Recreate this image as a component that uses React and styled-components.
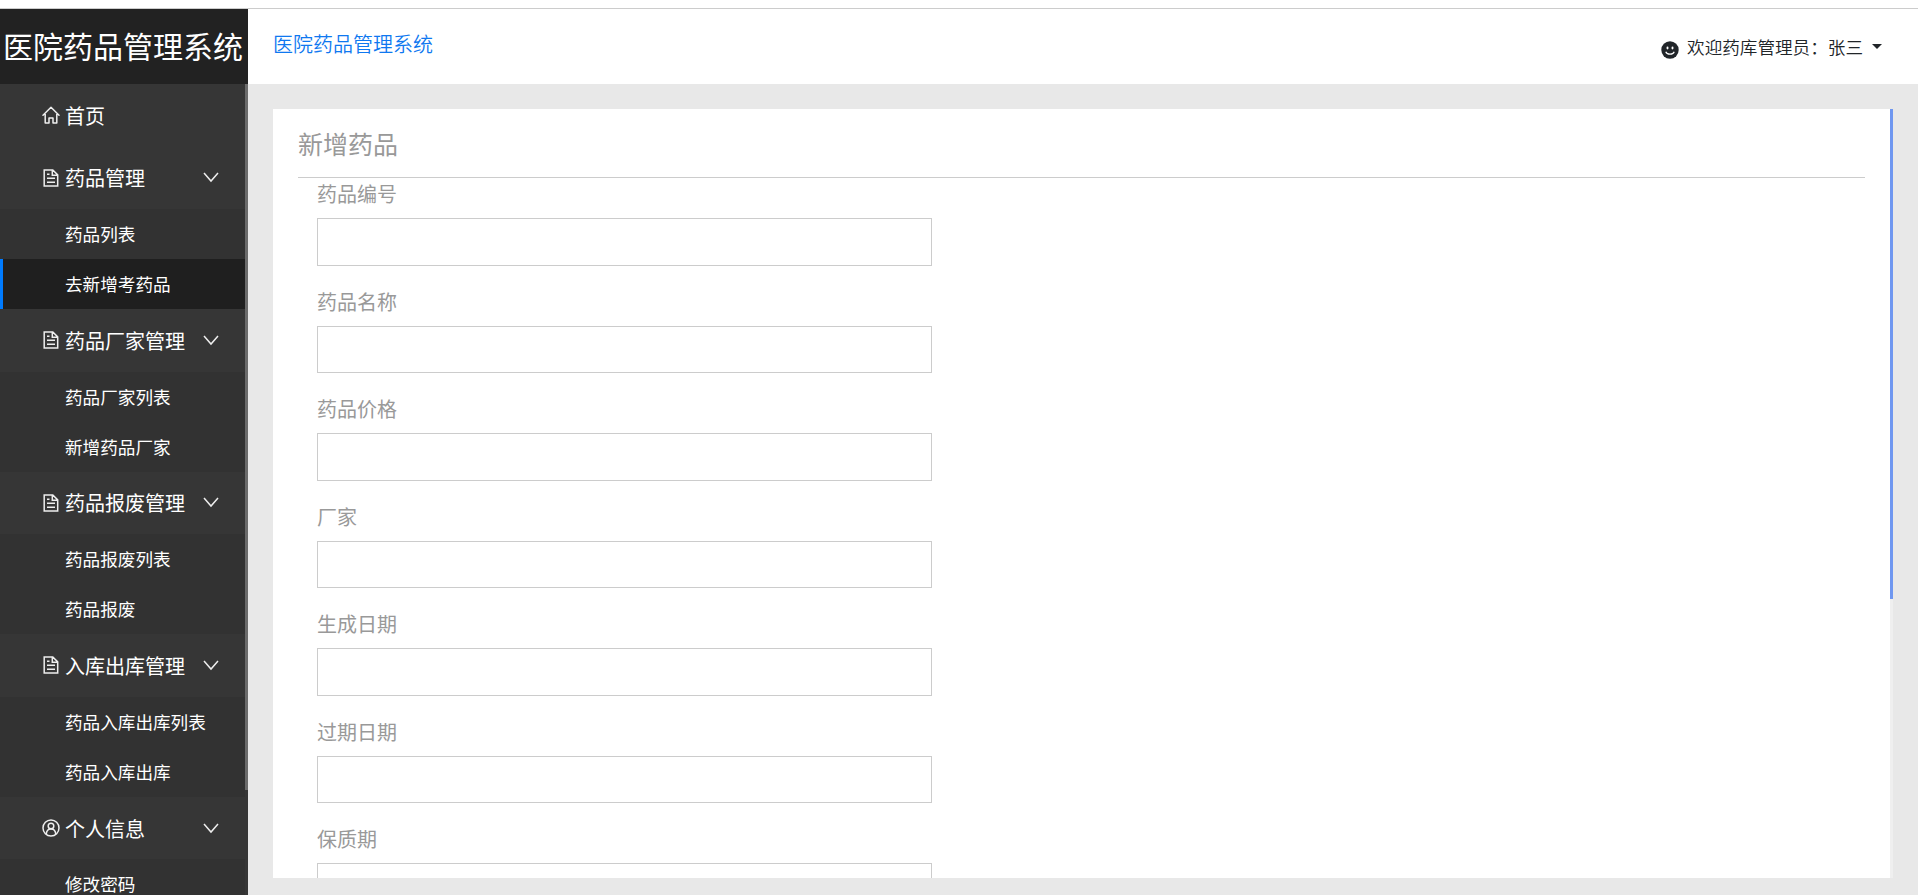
import React from 'react';
import styled, { createGlobalStyle } from 'styled-components';

const GlobalStyle = createGlobalStyle`
  * {
    box-sizing: border-box;
  }
  body {
    margin: 0;
    background-color: #fff;
    color: #212529;
    font-family: "Noto Sans CJK SC", sans-serif;
    font-weight: 400;
    overflow: hidden;
  }
`;

const Page = styled.div`
  display: flex;
  flex-direction: column;
  height: 895px;
  padding-top: 8px;
`;

const Layout = styled.div`
  display: flex;
  flex: 1;
  min-height: 0;
  border-top: 1px solid #ccc;
`;

const Sidebar = styled.aside`
  display: flex;
  flex-direction: column;
  width: 248px;
  background-color: #363636;
  color: #fff;
`;

const Brand = styled.div`
  height: 75px;
  padding-left: 3px;
  flex-shrink: 0;
  line-height: 73px;
  font-size: 30px;
  white-space: nowrap;
  background-color: #222;
`;

const MenuScroll = styled.div`
  display: flex;
  flex: 1;
  min-height: 0;
  overflow: hidden;
`;

const Menu = styled.nav`
  width: 245px;
`;

const MenuThumb = styled.div`
  width: 3px;
  height: 706px;
  background-color: #6b6b6b;
`;

const MenuItem = styled.div`
  display: flex;
  align-items: center;
  height: 62.55px;
  padding: 0 26px 0 42px;
  font-size: 20px;
  cursor: pointer;
`;

const MenuLabel = styled.span`
  flex: 1;
  margin-left: 5px;
  white-space: nowrap;
`;

const SubMenu = styled.ul`
  margin: 0;
  padding: 0;
  list-style: none;
  background-color: #323232;
`;

const SubItem = styled.li`
  height: 50px;
  padding-left: ${props => (props.$active ? '62px' : '65px')};
  border-left: ${props => (props.$active ? '3px solid #007bff' : 'none')};
  background-color: ${props => (props.$active ? '#1f1f1f' : 'transparent')};
  font-size: 17.6px;
  line-height: 50px;
  white-space: nowrap;
  cursor: pointer;
`;

const Main = styled.main`
  display: flex;
  flex: 1;
  flex-direction: column;
  min-width: 0;
  background-color: #e8e8e8;
`;

const Header = styled.header`
  display: flex;
  justify-content: space-between;
  height: 75px;
  padding: 0 36px 0 25px;
  background-color: #fff;
`;

const HeaderLink = styled.a`
  font-size: 20px;
  font-weight: 350;
  line-height: 69px;
  color: #0f78f0;
`;

const UserMenu = styled.div`
  display: flex;
  align-items: center;
  height: 75px;
  font-size: 17.6px;
  font-weight: 350;
`;

const UserName = styled.span`
  margin: 0 9px 0 8px;
`;

const Caret = styled.span`
  margin-top: -1px;
  border-top: 5px solid #212529;
  border-left: 5px solid transparent;
  border-right: 5px solid transparent;
`;

const Content = styled.div`
  display: flex;
  flex: 1;
  min-height: 0;
  margin: 25px 25px 17px;
`;

const Panel = styled.section`
  flex: 1;
  padding: 0 25px;
  background-color: #fff;
  color: #999;
  overflow: hidden;
`;

const PanelTrack = styled.div`
  width: 3px;
  background-color: #efefef;
`;

const PanelThumb = styled.div`
  height: 490px;
  background-color: #6f97f0;
`;

const PanelTitle = styled.h3`
  height: 69px;
  margin: 0;
  border-bottom: 1px solid #ccc;
  font-size: 25px;
  font-weight: 400;
  line-height: 68px;
`;

const Form = styled.form`
  display: flex;
  flex-direction: column;
  gap: 20px;
  width: 634px;
  padding-left: 19px;
`;

const Field = styled.label`
  display: flex;
  flex-direction: column;
  gap: 9px;
  font-size: 20px;
  line-height: 31px;
`;

const Input = styled.input`
  width: 100%;
  height: 47.5px;
  padding: 6px 12px;
  border: 1px solid #ccc;
  border-radius: 0;
  background-color: #fff;
  outline: none;
`;

const HomeIcon = () => (
  <svg width="18" height="18" viewBox="0 0 18 18" fill="none" stroke="#eee" strokeWidth="1.5" strokeLinejoin="round" strokeLinecap="round">
    <path d="M1 9.2 9 1.3l8 7.9M3.2 8v9H7v-5h4v5h3.8V8" />
  </svg>
);

const FileIcon = () => (
  <svg width="18" height="18" viewBox="0 0 18 18" fill="none" stroke="#eee" strokeWidth="1.5">
    <path d="M2.2 1h8.6l4.9 4.9V17H2.2zM10.3 1v5.2h5.4M5 5.2h2.5M5 9.3h8M5 13.2h8" />
  </svg>
);

const PersonIcon = () => (
  <svg width="18" height="18" viewBox="0 0 18 18" fill="none" stroke="#eee" strokeWidth="1.5">
    <circle cx="9" cy="9" r="8" />
    <circle cx="9" cy="7" r="2.8" />
    <path d="M4.3 15c.2-3 2-5 4.7-5s4.5 2 4.7 5" />
  </svg>
);

const Chevron = () => (
  <svg width="16" height="11" viewBox="0 0 16 11" fill="none" stroke="#eee" strokeWidth="1.5">
    <path d="m1 1 7 8 7-8" />
  </svg>
);

const SmileSvg = styled.svg`
  margin-top: 6px;
`;

const SmileIcon = () => (
  <SmileSvg width="18" height="18" viewBox="0 0 18 18">
    <circle cx="9" cy="9" r="8.7" fill="#212529" />
    <ellipse cx="6.5" cy="7" rx="1" ry="1.4" fill="#fff" />
    <ellipse cx="11.5" cy="7" rx="1" ry="1.4" fill="#fff" />
    <path d="M4.8 10.7c1 3.2 7.4 3.2 8.4 0" fill="none" stroke="#fff" strokeWidth="1.2" />
  </SmileSvg>
);

const menu = [
  { label: '首页', icon: HomeIcon },
  { label: '药品管理', icon: FileIcon, items: ['药品列表', '去新增考药品'] },
  { label: '药品厂家管理', icon: FileIcon, items: ['药品厂家列表', '新增药品厂家'] },
  { label: '药品报废管理', icon: FileIcon, items: ['药品报废列表', '药品报废'] },
  { label: '入库出库管理', icon: FileIcon, items: ['药品入库出库列表', '药品入库出库'] },
  { label: '个人信息', icon: PersonIcon, items: ['修改密码'] }
];

const fields = ['药品编号', '药品名称', '药品价格', '厂家', '生成日期', '过期日期', '保质期'];

const MenuGroup = ({ group, current }) => {
  const Icon = group.icon;
  return (
    <div>
      <MenuItem>
        <Icon />
        <MenuLabel>{group.label}</MenuLabel>
        {group.items && <Chevron />}
      </MenuItem>
      {group.items &&
      <SubMenu>
        {group.items.map(item => (
          <SubItem key={item} $active={item === current}>{item}</SubItem>
        ))}
      </SubMenu>
      }
    </div>
  );
};

const App = () => (
  <Page>
    <GlobalStyle />
    <Layout>
      <Sidebar>
        <Brand>医院药品管理系统</Brand>
        <MenuScroll>
          <Menu>
            {menu.map(group => (
              <MenuGroup key={group.label} group={group} current="去新增考药品" />
            ))}
          </Menu>
          <MenuThumb />
        </MenuScroll>
      </Sidebar>
      <Main>
        <Header>
          <HeaderLink>医院药品管理系统</HeaderLink>
          <UserMenu>
            <SmileIcon />
            <UserName>欢迎药库管理员：张三</UserName>
            <Caret />
          </UserMenu>
        </Header>
        <Content>
          <Panel>
            <PanelTitle>新增药品</PanelTitle>
            <Form>
              {fields.map(field => (
                <Field key={field}>
                  {field}
                  <Input type="text" />
                </Field>
              ))}
            </Form>
          </Panel>
          <PanelTrack>
            <PanelThumb />
          </PanelTrack>
        </Content>
      </Main>
    </Layout>
  </Page>
);

export default App;
